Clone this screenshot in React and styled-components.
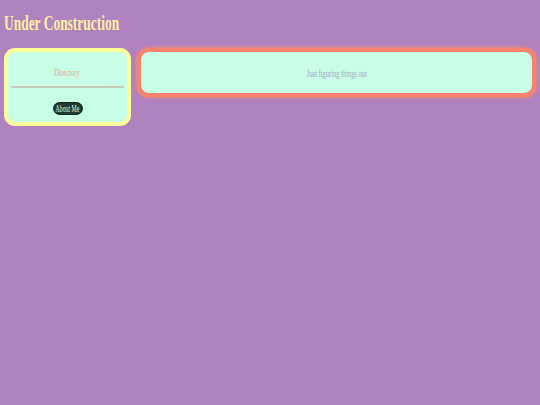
import styled, { createGlobalStyle } from "styled-components";

const GlobalStyle = createGlobalStyle`
    html, body {
        margin: 0;
        padding: 0;
        background: #b082c0;
        font-family: "Liberation Serif", "Times New Roman", serif;
    }
`;

const Page = styled.div`
    display: flex;
    flex-direction: column;
    padding: 0 4px;
    min-height: 405px;
    box-sizing: border-box;
`;

const Heading = styled.h1`
    margin: 11px 0 13px 0;
    font-size: 21px;
    line-height: 24px;
    font-weight: 700;
    color: #fdf0a0;
    white-space: nowrap;
`;

// text in the shot is squeezed sideways, so squash it to match
const Squeeze = styled.span`
    display: inline-block;
    white-space: nowrap;
    transform: scaleX(${(p) => p.$x || 0.6});
    transform-origin: ${(p) => p.$origin || "center"};
`;

const Row = styled.div`
    display: flex;
    flex-direction: row;
    align-items: flex-start;
    gap: 6px;
`;

const Sidebar = styled.nav`
    display: flex;
    flex-direction: column;
    align-items: stretch;
    width: 127px;
    box-sizing: border-box;
    border: 4px solid #ffff99;
    border-radius: 11px;
    background: #c8fde6;
    padding: 0 3px 7px 3px;
`;

const NavTitle = styled.div`
    display: flex;
    justify-content: center;
    margin-top: 13px;
    height: 14px;
    line-height: 14px;
    font-size: 11px;
    color: #e4a98c;
`;

const Divider = styled.hr`
    margin: 7px 0 0 0;
    border: 0;
    border-top: 2px solid #c6c8b8;
`;

const NavButton = styled.button`
    display: flex;
    align-items: center;
    justify-content: center;
    align-self: center;
    margin-top: 14px;
    width: 30px;
    height: 13px;
    padding: 0;
    border: 1px solid #12241e;
    border-radius: 7px;
    background: #1f3b33;
    color: #c8fde6;
    font-family: inherit;
    font-size: 11px;
    line-height: 11px;
    overflow: visible;
`;

const Main = styled.main`
    flex: 1;
    display: flex;
    align-items: center;
    justify-content: center;
    height: 49px;
    box-sizing: border-box;
    border: 4px solid #f7826e;
    border-radius: 12px;
    box-shadow: 0 0 3px 1px #f08a74;
    background: #c8fde6;
    font-size: 11px;
    color: #aaa3c2;
`;

export default function App() {
    return (
        <>
            <GlobalStyle />
            <Page>
                <Heading>
                    <Squeeze $x={0.64} $origin="left">Under Construction</Squeeze>
                </Heading>
                <Row>
                    <Sidebar>
                        <NavTitle>
                            <Squeeze $x={0.61}>Directory</Squeeze>
                        </NavTitle>
                        <Divider />
                        <NavButton>
                            <Squeeze $x={0.53}>About Me</Squeeze>
                        </NavButton>
                    </Sidebar>
                    <Main>
                        <Squeeze $x={0.59}>Just figuring things out</Squeeze>
                    </Main>
                </Row>
            </Page>
        </>
    );
}
